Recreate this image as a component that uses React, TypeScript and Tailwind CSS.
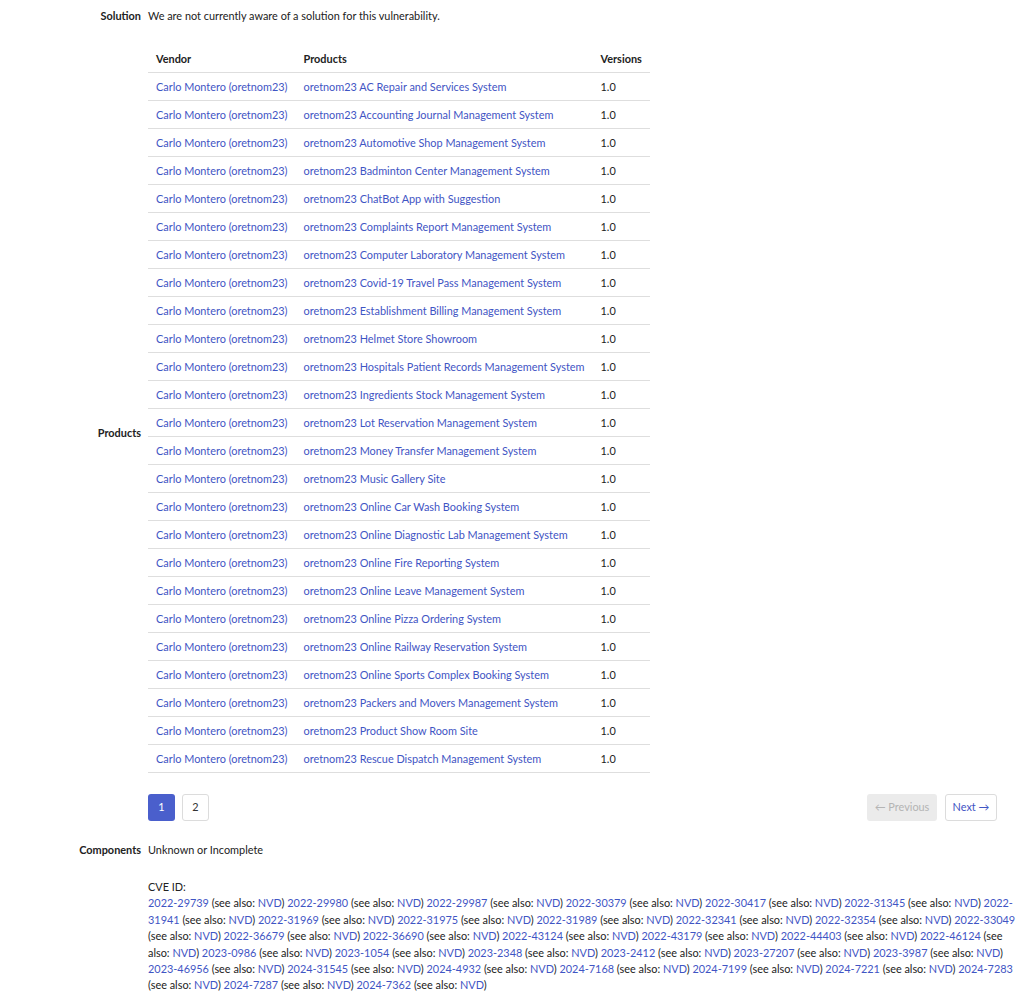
import React from "react";

const products = [
  "AC Repair and Services System",
  "Accounting Journal Management System",
  "Automotive Shop Management System",
  "Badminton Center Management System",
  "ChatBot App with Suggestion",
  "Complaints Report Management System",
  "Computer Laboratory Management System",
  "Covid-19 Travel Pass Management System",
  "Establishment Billing Management System",
  "Helmet Store Showroom",
  "Hospitals Patient Records Management System",
  "Ingredients Stock Management System",
  "Lot Reservation Management System",
  "Money Transfer Management System",
  "Music Gallery Site",
  "Online Car Wash Booking System",
  "Online Diagnostic Lab Management System",
  "Online Fire Reporting System",
  "Online Leave Management System",
  "Online Pizza Ordering System",
  "Online Railway Reservation System",
  "Online Sports Complex Booking System",
  "Packers and Movers Management System",
  "Product Show Room Site",
  "Rescue Dispatch Management System",
];

const A = ({ children }: { children: React.ReactNode }) => (
  <a className="text-[#3f55c4] no-underline">{children}</a>
);

type Tok = string;
const lines: Tok[][] = [
  ["#2022-29739", "s", "#2022-29980", "s", "#2022-29987", "s", "#2022-30379", "s", "#2022-30417", "s", "#2022-31345", "s", "#2022-"],
  ["#31941", "s", "#2022-31969", "s", "#2022-31975", "s", "#2022-31989", "s", "#2022-32341", "s", "#2022-32354", "s", "#2022-33049"],
  ["s0", "#2022-36679", "s", "#2022-36690", "s", "#2022-43124", "s", "#2022-43179", "s", "#2022-44403", "s", "#2022-46124", "see"],
  ["also", "#2023-0986", "s", "#2023-1054", "s", "#2023-2348", "s", "#2023-2412", "s", "#2023-27207", "s", "#2023-3987", "send"],
  ["#2023-46956", "s", "#2024-31545", "s", "#2024-4932", "s", "#2024-7168", "s", "#2024-7199", "s", "#2024-7221", "s", "#2024-7283"],
  ["s0", "#2024-7287", "s", "#2024-7362", "send"],
];

function renderTok(t: Tok, i: number) {
  if (t.startsWith("#")) return <A key={i}>{t.slice(1)}</A>;
  if (t === "s")
    return (
      <React.Fragment key={i}>
        {" (see also: "}
        <A>NVD</A>
        {") "}
      </React.Fragment>
    );
  if (t === "s0")
    return (
      <React.Fragment key={i}>
        {"(see also: "}
        <A>NVD</A>
        {") "}
      </React.Fragment>
    );
  if (t === "send")
    return (
      <React.Fragment key={i}>
        {" (see also: "}
        <A>NVD</A>
        {")"}
      </React.Fragment>
    );
  if (t === "see") return <React.Fragment key={i}>{" (see"}</React.Fragment>;
  if (t === "also")
    return (
      <React.Fragment key={i}>
        {"also: "}
        <A>NVD</A>
        {") "}
      </React.Fragment>
    );
  return null;
}

export default function App() {
  return (
    <div
      className="bg-white text-[10.9px] text-[#222] w-[1018px] h-[998px] overflow-hidden"
      style={{ fontFamily: "Lato, 'Noto Sans', sans-serif" }}
    >
      <div className="grid grid-cols-[141px_minmax(0,1fr)] gap-x-[7px] gap-y-[21px] pt-[8px] pr-[21px] items-center">
        <div className="text-right font-bold leading-[16px]">Solution</div>
        <div className="leading-[16px]">We are not currently aware of a solution for this vulnerability.</div>

        <div className="text-right font-bold leading-[16px]">Products</div>
        <div>
          <table className="border-collapse">
            <thead>
              <tr className="border-b border-[#dedede]">
                <th className="text-left font-bold px-2 py-[6px] leading-[15px]">Vendor</th>
                <th className="text-left font-bold px-2 py-[6px] leading-[15px]">Products</th>
                <th className="text-left font-bold px-2 py-[6px] leading-[15px]">Versions</th>
              </tr>
            </thead>
            <tbody>
              {products.map((p) => (
                <tr key={p} className="border-b border-[#dedede]">
                  <td className="px-2 py-[6px] leading-[15px] whitespace-nowrap">
                    <A>Carlo Montero (oretnom23)</A>
                  </td>
                  <td className="px-2 py-[6px] leading-[15px] whitespace-nowrap">
                    <A>oretnom23 {p}</A>
                  </td>
                  <td className="px-2 py-[6px] leading-[15px]">1.0</td>
                </tr>
              ))}
            </tbody>
          </table>
          <div className="flex items-center justify-between mt-[21px]">
            <div className="flex gap-[7px]">
              <div className="w-[27px] h-[27px] rounded-[3px] bg-[#4a5fcc] text-white flex items-center justify-center">1</div>
              <div className="w-[27px] h-[27px] rounded-[3px] border border-[#dcdcdc] text-[#333] flex items-center justify-center">2</div>
            </div>
            <div className="flex gap-[8px]">
              <div className="w-[70px] h-[27px] rounded-[3px] bg-[#ebebeb] text-[#b4b4b4] flex items-center justify-center">
                ← Previous
              </div>
              <div className="w-[52px] h-[27px] rounded-[3px] border border-[#dcdcdc] text-[#3f55c4] flex items-center justify-center">
                Next →
              </div>
            </div>
          </div>
        </div>

        <div className="text-right font-bold leading-[16px]">Components</div>
        <div className="leading-[16px]">Unknown or Incomplete</div>

        <div></div>
        <div className="leading-[16.4px]">
          <div>CVE ID:</div>
          {lines.map((l, i) => (
            <div key={i} className="whitespace-nowrap">
              {l.map(renderTok)}
            </div>
          ))}
          <div>CPE ID:</div>
        </div>
      </div>
    </div>
  );
}
